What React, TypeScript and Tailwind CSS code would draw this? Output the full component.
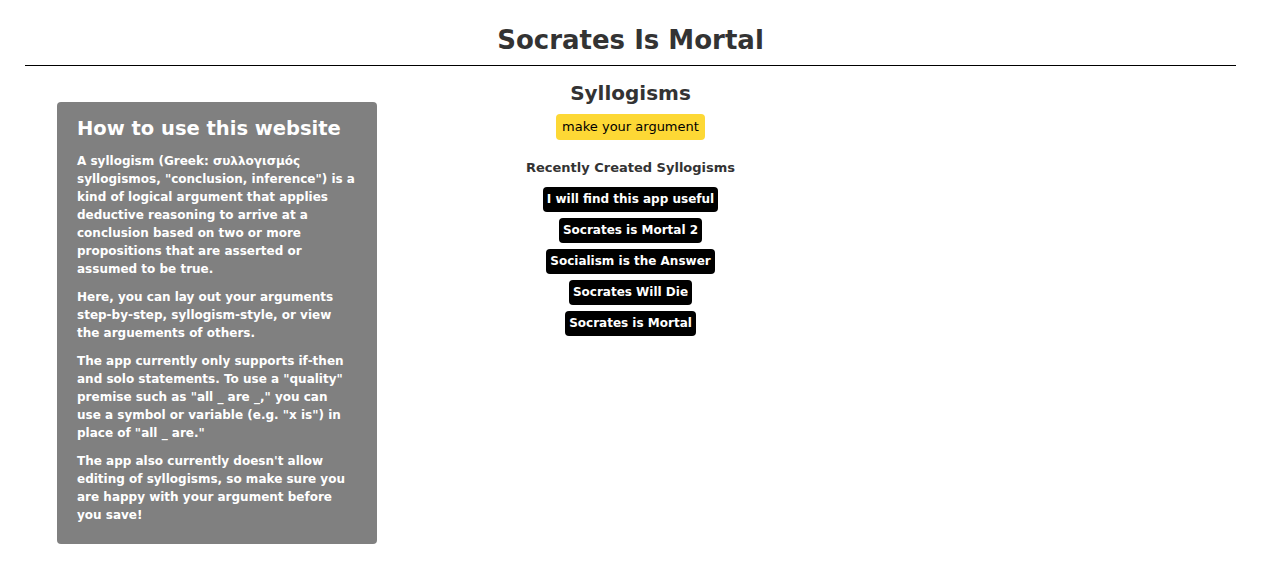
import React from 'react';

const recent = [
  'I will find this app useful',
  'Socrates is Mortal 2',
  'Socialism is the Answer',
  'Socrates Will Die',
  'Socrates is Mortal',
];

const App: React.FC = () => {
  return (
    <div className="min-h-screen bg-white text-[#333] px-[25px]" style={{ fontFamily: '"DejaVu Sans", Verdana, sans-serif' }}>
      {/* Header */}
      <h1 className="text-center text-[26px] font-bold leading-[34px] pt-[23px] pb-[8px]">Socrates Is Mortal</h1>
      <hr className="border-0 border-t border-black" />

      <div className="grid grid-cols-3">
        {/* Help panel */}
        <div className="pl-[32px] pt-[36px]">
          <div className="w-[320px] bg-[#808080] rounded-[4px] px-[20px] pt-[14px] pb-[20px] text-white">
            <h2 className="text-[19.5px] font-bold leading-[26px] mb-[10px]">How to use this website</h2>
            <div className="text-[12px] font-bold leading-[18px] space-y-[10px]">
              <p>
                A syllogism (Greek: συλλογισμός syllogismos, "conclusion, inference") is a kind of logical argument that
                applies deductive reasoning to arrive at a conclusion based on two or more propositions that are asserted
                or assumed to be true.
              </p>
              <p>Here, you can lay out your arguments step-by-step, syllogism-style, or view the arguements of others.</p>
              <p>
                The app currently only supports if-then and solo statements. To use a "quality" premise such as "all _ are
                _," you can
                <br />
                use a symbol or variable (e.g. "x is") in place of "all _ are."
              </p>
              <p>
                The app also currently doesn't allow editing of syllogisms, so make sure you are happy with your argument
                before you save!
              </p>
            </div>
          </div>
        </div>

        {/* Syllogisms */}
        <div className="flex flex-col items-center pt-[14px]">
          <h2 className="text-[20px] font-bold leading-[26px]">Syllogisms</h2>
          <button className="mt-[8px] bg-[#fdd835] text-black text-[13px] leading-[16px] px-[6px] py-[5px] rounded-[4px]">
            make your argument
          </button>
          <h3 className="mt-[19px] text-[13px] font-bold leading-[18px]">Recently Created Syllogisms</h3>
          <div className="mt-[10px] flex flex-col items-center gap-[6px]">
            {recent.map((s) => (
              <button
                key={s}
                className="bg-black text-white text-[12px] font-bold leading-[17px] px-[4px] py-[4px] rounded-[4px]"
              >
                {s}
              </button>
            ))}
          </div>
        </div>

        <div />
      </div>
    </div>
  );
};

export default App;
